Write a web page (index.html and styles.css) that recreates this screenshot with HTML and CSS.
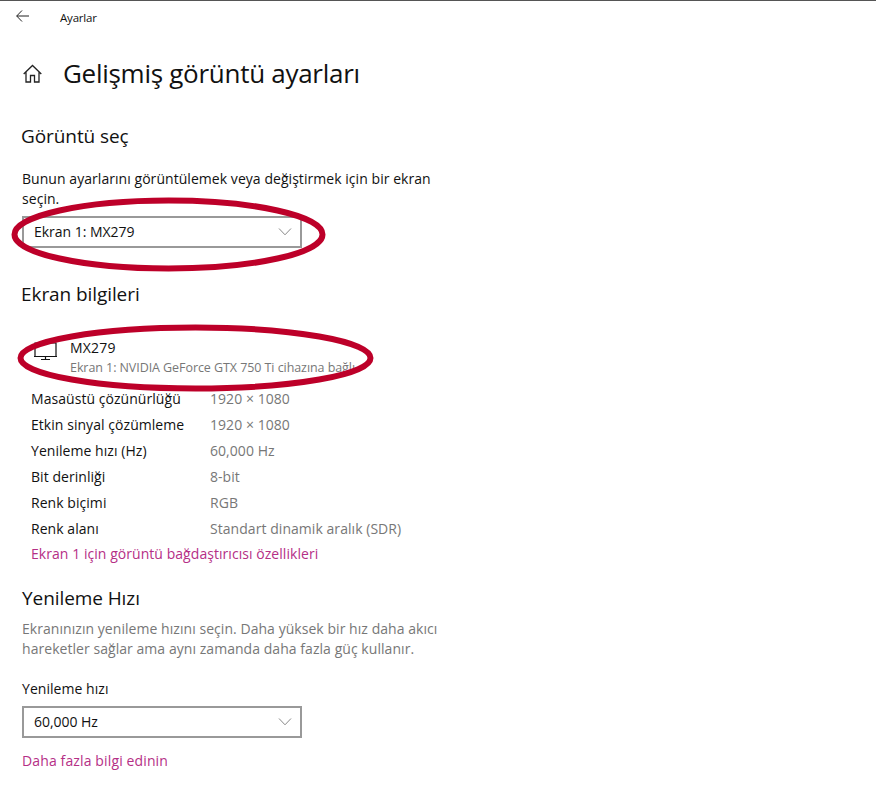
FILE: index.html
```html
<!DOCTYPE html>
<html lang="tr">
<head>
    <meta charset="UTF-8">
    <meta name="viewport" content="width=device-width, initial-scale=1.0">
    <title>Ayarlar</title>
    <link rel="stylesheet" href="styles.css">
</head>
<body>

    <div class="topbar">
        <svg class="back-icon" width="13" height="12" viewBox="0 0 13 12"><path d="M6 .5.7 6 6 11.500M.7 6H13" fill="none" stroke="#222" stroke-width="1"/></svg>
        <span class="topbar-title">Ayarlar</span>
    </div>

    <div class="page-head">
        <svg class="home-icon" width="19" height="19" viewBox="0 0 19 19"><path d="M.7 10 9.500 1.500 18.300 10M3 8v10h4.500v-6.500h4V18H16V8" fill="none" stroke="#222" stroke-width="1.300"/></svg>
        <h1>Gelişmiş görüntü ayarları</h1>
    </div>

    <h2 class="first-heading">Görüntü seç</h2>
    <p class="text">Bunun ayarlarını görüntülemek veya değiştirmek için bir ekran seçin.</p>
    <div class="select select-first">
        <span>Ekran 1: MX279</span>
        <svg width="14" height="8" viewBox="0 0 14 8"><path d="M1 .5 7 6.800 13 .5" fill="none" stroke="#888" stroke-width="1"/></svg>
    </div>

    <h2 class="info-heading">Ekran bilgileri</h2>
    <div class="display">
        <svg class="monitor-icon" width="23" height="18" viewBox="0 0 23 18"><path d="M1 14V1h21v13M0 14.500h23M11.500 15v2.500M7 17.500h9" fill="none" stroke="#111" stroke-width="1.200"/></svg>
        <div>
            <div class="display-name">MX279</div>
            <div class="display-sub">Ekran 1: NVIDIA GeForce GTX 750 Ti cihazına bağlı</div>
        </div>
    </div>

    <div class="specs">
        <span>Masaüstü çözünürlüğü</span><span class="value">1920 × 1080</span>
        <span>Etkin sinyal çözümleme</span><span class="value">1920 × 1080</span>
        <span>Yenileme hızı (Hz)</span><span class="value">60,000 Hz</span>
        <span>Bit derinliği</span><span class="value">8-bit</span>
        <span>Renk biçimi</span><span class="value">RGB</span>
        <span>Renk alanı</span><span class="value">Standart dinamik aralık (SDR)</span>
    </div>
    <a class="link link-specs" href="#">Ekran 1 için görüntü bağdaştırıcısı özellikleri</a>

    <h2 class="rate-heading">Yenileme Hızı</h2>
    <p class="text muted">Ekranınızın yenileme hızını seçin. Daha yüksek bir hız daha akıcı hareketler sağlar ama aynı zamanda daha fazla güç kullanır.</p>
    <div class="field-label">Yenileme hızı</div>
    <div class="select">
        <span>60,000 Hz</span>
        <svg width="14" height="8" viewBox="0 0 14 8"><path d="M1 .5 7 6.800 13 .5" fill="none" stroke="#888" stroke-width="1"/></svg>
    </div>
    <a class="link link-more" href="#">Daha fazla bilgi edinin</a>

    <!-- red marker circles drawn over the screenshot -->
    <svg class="marks" width="876" height="785" viewBox="0 0 876 785">
        <ellipse cx="168.500" cy="234.500" rx="154" ry="34" fill="none" stroke="#bd0029" stroke-width="6"/>
        <ellipse cx="195.500" cy="358" rx="175" ry="30.500" fill="none" stroke="#bd0029" stroke-width="6"/>
    </svg>

</body>
</html>
```

FILE: styles.css
```css
* {
    box-sizing: border-box;
}
body {
    margin: 0;
    height: 785px;
    overflow: hidden;
    position: relative;
    background-color: #fff;
    color: #111;
    font-family: "Open Sans", Arial, sans-serif;
    font-size: 14px;
    line-height: 20px;
    padding: 0 0 0 22px;
    border-top: 1px solid #555;
}
.topbar {
    display: flex;
    align-items: center;
    height: 33px;
    margin-left: -6px;
}
.back-icon {
    margin-top: -3px;
}
.topbar-title {
    margin-left: 31px;
    font-size: 11.500px;
    letter-spacing: -0.200px;
}
.page-head {
    display: flex;
    align-items: center;
    height: 40px;
    margin-top: 19px;
    margin-left: 1px;
}
.home-icon {
    margin-top: 1px;
}
h1 {
    margin: 0 0 0 21px;
    font-size: 26px;
    font-weight: 400;
    letter-spacing: -0.280px;
}
h2 {
    margin: 0 0 0 -1px;
    font-size: 19px;
    font-weight: 400;
    line-height: 26px;
    letter-spacing: -0.080px;
}
.first-heading {
    margin-top: 30px;
}
.text {
    margin: 20px 0 0;
    width: 425px;
    letter-spacing: 0.050px;
}
.select {
    display: flex;
    align-items: center;
    justify-content: space-between;
    width: 280px;
    height: 32px;
    margin-top: 8px;
    padding: 0 8px 0 10px;
    border: 2px solid #999;
    letter-spacing: -0.030px;
}
.select-first {
    margin-top: 7px;
}
.info-heading {
    margin-top: 33px;
}
.display {
    display: flex;
    margin: 28px 0 0 12px;
    height: 51px;
}
.monitor-icon {
    margin: 7px 13px 0 0;
}
.display-name {
    letter-spacing: 0.200px;
    margin-top: 3px;
}
.display-sub {
    color: #777;
    font-size: 12.500px;
    letter-spacing: -0.070px;
}
.specs {
    display: grid;
    grid-template-columns: 179px 1fr;
    grid-auto-rows: 26px;
    align-items: center;
    margin: 0 0 0 9px;
    letter-spacing: 0.050px;
}
.value {
    color: #777;
}
.link {
    display: block;
    color: #b52f86;
    text-decoration: none;
    letter-spacing: 0.050px;
}
.link-specs {
    margin: 2px 0 0 9px;
}
.rate-heading {
    margin: 21px 0 0;
}
.muted {
    color: #777;
    margin-top: 8px;
}
.field-label {
    margin-top: 20px;
    letter-spacing: 0.050px;
}
.field-label + .select {
    margin-top: 7px;
}
.link-more {
    margin-top: 13px;
    letter-spacing: 0.130px;
}
.marks {
    position: absolute;
    top: -1px;
    left: 0;
    pointer-events: none;
}
```
